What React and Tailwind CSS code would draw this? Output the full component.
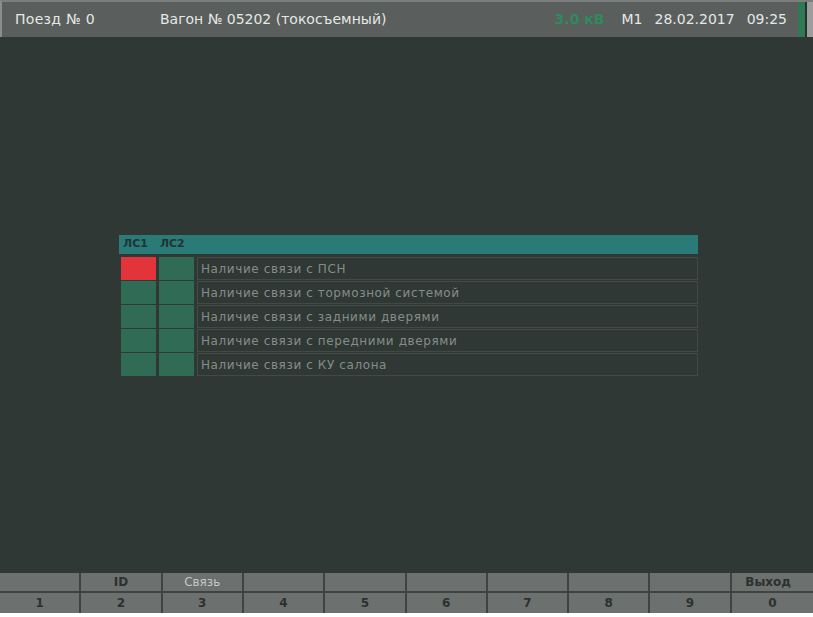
const rows = [
  { label: "Наличие связи с ПСН", ls1: true },
  { label: "Наличие связи с тормозной системой" },
  { label: "Наличие связи с задними дверями" },
  { label: "Наличие связи с передними дверями" },
  { label: "Наличие связи с КУ салона" },
];

const keys = [
  { top: "", n: "1" },
  { top: "ID", n: "2" },
  { top: "Связь", n: "3", light: true },
  { top: "", n: "4" },
  { top: "", n: "5" },
  { top: "", n: "6" },
  { top: "", n: "7" },
  { top: "", n: "8" },
  { top: "", n: "9" },
  { top: "Выход", n: "0", right: true },
];

function Header() {
  return (
    <header className="flex h-[37px] items-center border-t-2 border-l-2 border-t-[#7a7e7c] border-l-[#8a8e8c] bg-[#5a5e5c] text-[14px] text-[#e4e8e6]">
      <span className="ml-[13px] w-[145px] tracking-[0.3px]">Поезд № 0</span>
      <span>Вагон № 05202 (токосъемный)</span>
      <span className="ml-auto font-bold text-[#2f8a5e]">3.0 кВ</span>
      <span className="ml-[17px]">M1</span>
      <span className="ml-[12px]">28.02.2017</span>
      <span className="ml-[12px]">09:25</span>
      <div className="ml-[11px] h-full w-[7px] bg-[#2f7a55]" />
      <div className="h-full w-[2px] bg-[#2a302d]" />
      <div className="h-full w-[6px] bg-[#9a9e9c]" />
    </header>
  );
}

function LinkTable() {
  return (
    <div className="ml-[119px] mt-[198px] w-[579px]">
      <div className="flex h-[19px] items-center gap-[12px] bg-[#2a7a78] pl-[4px] text-[11px] font-bold text-[#1f3534]">
        <span>ЛС1</span>
        <span>ЛС2</span>
      </div>
      <div className="mt-[3px] flex flex-col gap-[1px]">
        {rows.map((r) => (
          <div key={r.label} className="flex h-[23px] items-stretch gap-[3px] pl-[2px]">
            <div className={`w-[35px] ${r.ls1 ? "bg-[#e2343a]" : "bg-[#2f6b55]"}`} />
            <div className="w-[35px] bg-[#2f6b55]" />
            <div className="flex flex-1 items-center border border-[#434a46] pl-[3px] text-[12px] tracking-[0.6px] text-[#858d89]">
              {r.label}
            </div>
          </div>
        ))}
      </div>
    </div>
  );
}

function Footer() {
  return (
    <footer className="grid h-[40px] grid-cols-10 bg-[#6c706e] text-[12px]">
      {keys.map((k, i) => (
        <div
          key={k.n}
          className={`flex flex-col ${i < 9 ? "border-r-2 border-[#3f4341]" : ""}`}
        >
          <div
            className={`flex h-[20px] items-center border-b-2 border-[#3f4341] ${
              k.right ? "justify-end pr-[22px]" : "justify-center"
            } ${k.light ? "text-[#c4c8c6]" : "font-semibold text-[#2c302e]"}`}
          >
            {k.top}
          </div>
          <div className="flex flex-1 items-center justify-center font-semibold text-[#2c302e]">
            {k.n}
          </div>
        </div>
      ))}
    </footer>
  );
}

export default function App() {
  return (
    <div
      className="flex h-[617px] w-[813px] flex-col bg-white"
      style={{ fontFamily: '"DejaVu Sans", Verdana, sans-serif' }}
    >
      <Header />
      <main className="flex-1 bg-[#2f3834]">
        <LinkTable />
      </main>
      <Footer />
      <div className="h-[4px] bg-white" />
    </div>
  );
}
